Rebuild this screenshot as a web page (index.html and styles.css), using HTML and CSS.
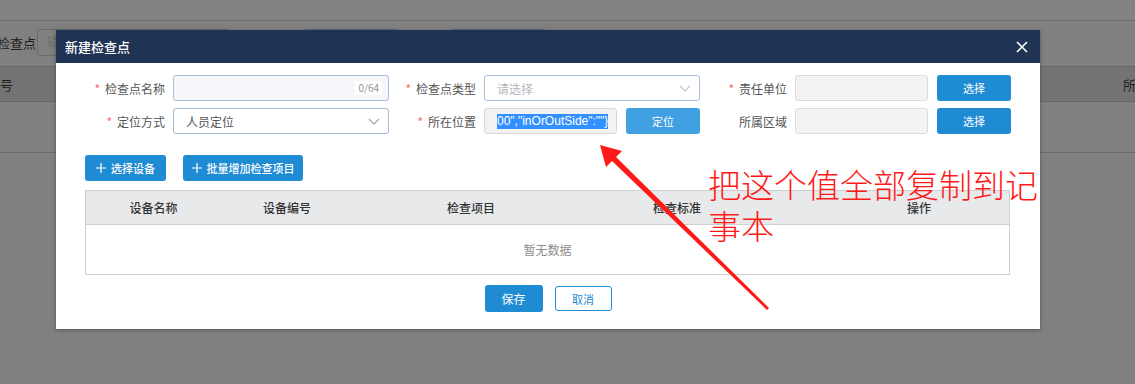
FILE: index.html
```html
<!DOCTYPE html>
<html lang="zh">
<head>
<meta charset="utf-8">
<title>新建检查点</title>
<link rel="stylesheet" href="styles.css">
</head>
<body>
<div class="page">
  <div class="topbar"></div>
  <div class="search">
    <span class="s-label">检查点</span>
    <span class="s-input">输</span>
    <span class="s-input s-input-b"></span>
    <span class="s-input s-input-c"></span>
  </div>
  <div class="thead-bg"><span>号</span><span>所</span></div>
  <div class="row-bg"></div>
</div>

<div class="dialog">
  <div class="dlg-head">
    <span class="dlg-title">新建检查点</span>
    <svg class="close" width="12" height="12" viewBox="0 0 12 12"><path d="M1 1L11 11M11 1L1 11" stroke="#fff" stroke-width="1.6" fill="none"/></svg>
  </div>
  <div class="dlg-body">
    <div class="form-row">
      <div class="field">
        <label class="lbl lbl-first"><i>*</i>检查点名称</label>
        <div class="inp inp-blue w216"><span class="count">0/64</span></div>
      </div>
      <div class="field">
        <label class="lbl"><i>*</i>检查点类型</label>
        <div class="inp inp-sel w216"><span class="ph">请选择</span><svg class="chev" width="12" height="7" viewBox="0 0 12 7"><path d="M1 1L6 6L11 1" stroke="#c0c4cc" stroke-width="1.2" fill="none"/></svg></div>
      </div>
      <div class="field">
        <label class="lbl"><i>*</i>责任单位</label>
        <div class="inp inp-dis w133"></div>
        <button class="btn btn-pick">选择</button>
      </div>
    </div>
    <div class="form-row">
      <div class="field">
        <label class="lbl lbl-first"><i>*</i>定位方式</label>
        <div class="inp inp-sel inp-selb w216"><span class="val">人员定位</span><svg class="chev" width="12" height="7" viewBox="0 0 12 7"><path d="M1 1L6 6L11 1" stroke="#a0a4ac" stroke-width="1.2" fill="none"/></svg></div>
      </div>
      <div class="field">
        <label class="lbl"><i>*</i>所在位置</label>
        <div class="inp inp-dis inp-pos w133"><span class="sel">00","inOrOutSide":""}</span></div>
        <button class="btn btn-loc">定位</button>
      </div>
      <div class="field">
        <label class="lbl">所属区域</label>
        <div class="inp inp-dis w133"></div>
        <button class="btn btn-pick">选择</button>
      </div>
    </div>

    <div class="actions">
      <button class="btn btn-add w81"><svg width="10" height="10" viewBox="0 0 10 10"><path d="M5 0V10M0 5H10" stroke="#fff" stroke-width="1.2"/></svg>选择设备</button>
      <button class="btn btn-add w120"><svg width="10" height="10" viewBox="0 0 10 10"><path d="M5 0V10M0 5H10" stroke="#fff" stroke-width="1.2"/></svg>批量增加检查项目</button>
    </div>

    <div class="table">
      <div class="thead">
        <div class="th c1">设备名称</div>
        <div class="th c2">设备编号</div>
        <div class="th c3">检查项目</div>
        <div class="th c4">检查标准</div>
        <div class="th c5">操作</div>
      </div>
      <div class="tempty">暂无数据</div>
    </div>

    <div class="footer">
      <button class="btn btn-save">保存</button>
      <button class="btn btn-cancel">取消</button>
    </div>
  </div>
</div>

<div class="note">把这个值全部复制到记<br>事本</div>
<svg class="arrow" width="1135" height="384" viewBox="0 0 1135 384">
  <polygon points="600,145 606,167 612,161 767,310 769,308 616,157 622,151" fill="#ff1a1a"/>
</svg>
</body>
</html>
```

FILE: styles.css
```css
* { box-sizing: border-box; }
html, body { margin: 0; padding: 0; }
body {
  width: 1135px;
  height: 384px;
  overflow: hidden;
  background: #808080;
  font-family: "Noto Sans CJK SC", "Noto Sans", sans-serif;
  font-size: 12px;
  position: relative;
}

/* dimmed page behind the modal */
.page { width: 1135px; }
.topbar { height: 21px; background: #838383; border-bottom: 1px solid #6c6c6c; }
.search { height: 45px; display: flex; align-items: flex-start; padding-top: 8px; }
.s-label { margin-left: -3px; margin-top: 4px; color: #1e1e1e; font-size: 13px; width: 40px; white-space: nowrap; }
.s-input {
  width: 193px; height: 27px; border: 1px solid #6a6a6a; border-radius: 4px;
  color: #6e6e6e; font-size: 13px; padding: 2px 0 0 9px; overflow: hidden;
}
.s-input-b { width: 97px; margin-left: 73px; border-color: #5e6a78; }
.s-input-c { width: 97px; margin-left: 50px; border-color: #5e6a78; }
.thead-bg {
  height: 36px; background: #737373; border-top: 1px solid #676767; border-bottom: 1px solid #666;
  display: flex; justify-content: space-between; align-items: center; color: #1e1e1e; font-size: 13px;
}
.thead-bg span:last-child { margin-right: -1px; width: 13px; overflow: hidden; white-space: nowrap; }
.row-bg { height: 51px; border-bottom: 1px solid #6a6a6a; }

/* dialog */
.dialog {
  position: absolute; left: 56px; top: 30px; width: 984px; height: 299px;
  background: #fff; box-shadow: 0 1px 4px rgba(0,0,0,0.35);
}
.dlg-head {
  height: 33px; background: #1f3354; display: flex; align-items: center; justify-content: space-between;
  padding: 0 12px 0 9px;
}
.dlg-title { color: #fff; font-size: 13px; font-weight: 500; }
.close { margin-top: 1px; }

.dlg-body { padding: 12px 0 0 29px; }
.form-row { display: flex; height: 26px; margin-bottom: 7px; }
.field { display: flex; align-items: center; }
.lbl {
  width: 95px; text-align: right; padding-right: 8px; color: #555; font-size: 12px; white-space: nowrap;
}
.lbl-first { width: 88px; }
.lbl i { font-style: normal; color: #f56c6c; margin-right: 5px; }
.inp {
  height: 26px; border: 1px solid #dcdfe6; border-radius: 3px; position: relative;
  display: flex; align-items: center; padding: 0 12px; color: #555; overflow: hidden;
}
.w216 { width: 216px; }
.w133 { width: 133px; }
.inp-blue { background: #f5f7fa; border-color: #a9c0da; justify-content: flex-end; padding-right: 6px; }
.count { font-size: 10px; color: #909399; background: #fff; padding: 0 3px; line-height: 14px; }
.inp-sel { background: #fff; border-color: #a9c0da; justify-content: space-between; }
.inp-selb { border-color: #a4bcd6; }
.ph { color: #b4b8c0; }
.val { color: #555; }
.chev { margin-right: -4px; }
.inp-dis { background: #f3f3f3; border-color: #dcdcdc; }
.inp-pos { background: #f2f2f2; padding-left: 12px; border-color: #d8d8d8; }
.sel {
  background: #3390ff; color: #fff; white-space: nowrap; line-height: 15px; font-size: 12px;
  font-family: "Liberation Sans", sans-serif;
}

.btn {
  border: 0; border-radius: 3px; font-family: inherit; font-size: 11px; color: #fff;
  height: 26px; padding: 0; cursor: pointer; display: inline-flex; align-items: center; justify-content: center;
}
.btn-pick { width: 74px; margin-left: 9px; background: #1e8bd3; }
.btn-loc { width: 74px; margin-left: 9px; background: #41a0e2; }

.actions { display: flex; gap: 17px; margin-top: 21px; }
.btn-add { background: #1e8bd3; font-size: 11px; font-weight: 500; gap: 5px; }
.w81 { width: 81px; }
.w120 { width: 120px; }

.table { width: 925px; margin-top: 9px; border: 1px solid #cfcfcf; }
.thead {
  display: grid; grid-template-columns: 135px 132px 290px 186px 180px;
  height: 34px; background: #e8e9eb; border-bottom: 1px solid #cfcfcf; align-items: center;
}
.th { color: #333; font-weight: 500; font-size: 12px; white-space: nowrap; }
.c1, .c2, .c5 { text-align: center; }
.c3 { padding-left: 94px; }
.c4 { padding-left: 10px; }
.tempty { height: 49px; display: flex; align-items: center; justify-content: center; color: #8d8d8d; }

.footer { display: flex; justify-content: center; gap: 12px; margin-top: 10px; padding-right: 29px; }
.btn-save { width: 58px; height: 27px; background: #1e8bd3; font-size: 12px; }
.btn-cancel { width: 57px; height: 25px; margin-top: 1px; background: #fff; color: #1e8bd3; border: 1px solid #1e8bd3; font-size: 11px; }

/* annotation */
.note {
  position: absolute; left: 708px; top: 164px; width: 360px;
  color: #ff1a1a; font-size: 33px; line-height: 41px; font-weight: 300;
  font-family: "Noto Sans CJK SC", sans-serif; white-space: nowrap;
}
.arrow { position: absolute; left: 0; top: 0; pointer-events: none; }
```
